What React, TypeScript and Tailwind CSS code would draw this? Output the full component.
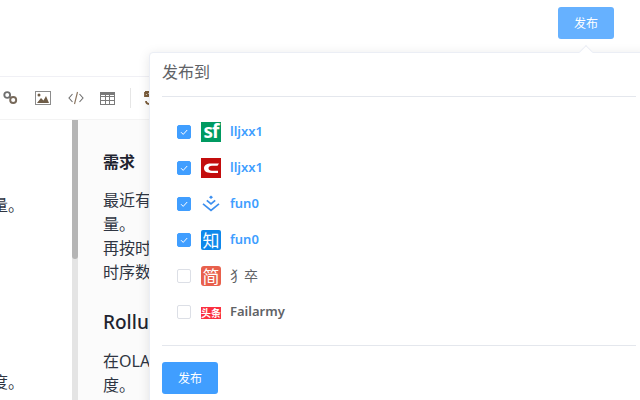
import React from 'react';

const sans = 'font-["Noto_Sans","Noto_Sans_CJK_SC",sans-serif]';

const Check = ({ on }: { on: boolean }) => (
  <span
    className={`flex h-[14px] w-[14px] items-center justify-center rounded-[2px] border ${
      on ? 'border-[#409eff] bg-[#409eff]' : 'border-[#dcdfe6] bg-white'
    }`}
  >
    {on && (
      <svg width="10" height="10" viewBox="0 0 10 10" fill="none" stroke="#fff" strokeWidth="1">
        <path d="M2 5.2 4.2 7.4 8.2 3" />
      </svg>
    )}
  </span>
);

const SfLogo = () => (
  <div className="flex h-5 w-5 items-center justify-center bg-[#009a61] pb-[2px] text-[19px] leading-none font-bold tracking-[-1px] text-white">
    sf
  </div>
);

const CsdnLogo = () => (
  <svg width="20" height="20" viewBox="0 0 20 20">
    <rect width="20" height="20" fill="#c30d0d" />
    <path d="M18 5.500H10C5.500 5.500 3 7.500 3 10.300S5.500 15 10 15h7v-2.300H11C8.800 12.700 7.500 11.700 7.500 10.200S8.800 7.800 11 7.800h5.500Z" fill="#fff" />
  </svg>
);

const JuejinLogo = () => (
  <svg width="20" height="20" viewBox="0 0 20 20" fill="none">
    <path d="M10 1.500 12 3.200 10 4.900 8 3.200Z" fill="#3c8fef" />
    <path d="M5.800 6.300 10 9.800 14.200 6.300" stroke="#3c8fef" strokeWidth="1.700" />
    <path d="M2 9.800 10 16.400 18 9.800" stroke="#3c8fef" strokeWidth="1.700" />
  </svg>
);

const ZhihuLogo = () => (
  <div className="flex h-5 w-5 items-center justify-center rounded-[2px] bg-[#0f88eb] text-[17px] leading-none text-white">
    知
  </div>
);

const JianshuLogo = () => (
  <div className="flex h-5 w-5 items-center justify-center rounded-[3px] bg-[#e8604c] text-[17px] leading-none text-white">
    简
  </div>
);

const ToutiaoLogo = () => (
  <div className="flex h-5 w-5 items-center pt-px">
    <div className="flex h-3 w-5 items-center justify-center bg-[#fb3040] text-[10px] leading-none font-bold text-white">
      头条
    </div>
  </div>
);

const accounts = [
  { on: true, logo: <SfLogo />, name: 'lljxx1' },
  { on: true, logo: <CsdnLogo />, name: 'lljxx1' },
  { on: true, logo: <JuejinLogo />, name: 'fun0' },
  { on: true, logo: <ZhihuLogo />, name: 'fun0' },
  { on: false, logo: <JianshuLogo />, name: '犭卒', light: true },
  { on: false, logo: <ToutiaoLogo />, name: 'Failarmy' },
];

const LinkIcon = () => (
  <svg width="15" height="16" viewBox="0 0 15 16" fill="none" stroke="#6f6f6f" strokeWidth="1.900">
    <circle cx="4.200" cy="5" r="2.900" />
    <circle cx="10.200" cy="10" r="3" stroke="#77695a" />
  </svg>
);

const ImageIcon = () => (
  <svg width="16" height="14" viewBox="0 0 16 14">
    <rect x="0.500" y="0.500" width="15" height="13" fill="#fff" stroke="#8c8c8c" />
    <circle cx="4" cy="4" r="1.500" fill="#6f5d48" />
    <path d="M2 12 6 7l2.500 2.500L11 5l3 7Z" fill="#6f5d48" />
  </svg>
);

const CodeIcon = () => (
  <svg width="16" height="14" viewBox="0 0 16 14" fill="none" stroke="#6f6f6f" strokeWidth="1.100">
    <path d="M4.500 3 1 7l3.500 4M11.500 3 15 7l-3.500 4" />
    <path d="M9.500 1 6.500 13" stroke="#8a7660" />
  </svg>
);

const TableIcon = () => (
  <svg width="15" height="13" viewBox="0 0 15 13" fill="none" stroke="#7a7a7a">
    <rect x="0.500" y="0.500" width="14" height="12" />
    <path d="M0 4.500h15M0 8.500h15M5.500 3v10M9.500 3v10" />
    <rect x="0" y="0" width="15" height="3" fill="#7a7a7a" stroke="none" />
  </svg>
);

const CutIcon = () => (
  <svg width="6" height="14" viewBox="0 0 6 14" fill="none" stroke="#7a5c3a" strokeWidth="1.800">
    <path d="M1 1h5M1 1v4h5M1 1l5 4" />
    <path d="M2 10c0 2 2 3 4 3" />
  </svg>
);

const App: React.FC = () => {
  return (
    <div className={`relative flex h-[400px] w-[640px] flex-col overflow-hidden bg-white ${sans}`}>
      {/* Header */}
      <div className="flex h-[77px] shrink-0 justify-end border-b border-[#f0f0f5] pt-[7px] pr-[26px]">
        <button className="h-8 w-14 rounded-[3px] bg-[#66b1ff] pt-px text-xs text-white">发布</button>
      </div>

      {/* Toolbar */}
      <div className="flex h-[43px] shrink-0 items-center border-b border-[#f3f3f3] pl-[3px]">
        <LinkIcon />
        <div className="ml-[17px]">
          <ImageIcon />
        </div>
        <div className="ml-[17px]">
          <CodeIcon />
        </div>
        <div className="ml-[16px]">
          <TableIcon />
        </div>
        <div className="ml-[15px] h-5 w-px bg-[#e6e6e6]" />
        <div className="ml-[13px]">
          <CutIcon />
        </div>
      </div>

      {/* Editor + preview */}
      <div className="flex min-h-0 flex-1 text-base text-[#2f3542]">
        <div className="w-[72px] shrink-0 overflow-hidden">
          <p className="mt-[73px] ml-[-8px] leading-6">量。</p>
          <p className="mt-[153px] ml-[-8px] leading-6">度。</p>
        </div>
        <div className="w-[6px] shrink-0 bg-[#e4e4e4]">
          <div className="h-[139px] rounded-b-[3px] bg-[#b5b5b5]" />
        </div>
        <div className="w-[72px] shrink-0 overflow-hidden bg-[#fbfbfb] pt-[32px] pl-[25px]">
          <h4 className="text-base leading-5 font-bold text-[#1f2430]">需求</h4>
          <div className="mt-4 w-[140px] leading-6">
            <p>最近有</p>
            <p>量。</p>
            <p>再按时</p>
            <p>时序数</p>
          </div>
          <h3 className="mt-6 text-[19px] leading-7 font-medium text-[#1f2430]">Rollu</h3>
          <div className="mt-[13px] w-[140px] leading-6">
            <p>在OLA</p>
            <p>度。</p>
          </div>
        </div>
      </div>

      {/* Publish popover */}
      <div className="absolute top-[52px] left-[149px] flex h-[360px] w-[500px] flex-col rounded-[4px] border border-[#ebeef5] bg-white pr-3 pl-3 shadow-[0_2px_12px_0_rgba(0,0,0,0.1)]">
        <div className="absolute top-[-6px] left-[431px] h-[10px] w-[10px] rotate-45 border-t border-l border-[#ebeef5] bg-white" />
        <div className="flex h-11 shrink-0 items-center border-b border-[#e4e7ed] pb-[5px] text-base text-[#606266]">发布到</div>
        <ul className="flex flex-col pt-[17px] pl-[15px]">
          {accounts.map((a, i) => (
            <li key={i} className="flex h-9 items-center">
              <Check on={a.on} />
              <div className="ml-[10px] w-5">{a.logo}</div>
              <span
                className={`ml-[9px] ${a.light ? 'text-sm font-normal' : 'text-[13px] font-semibold'} ${
                  a.on ? 'text-[#409eff]' : 'text-[#606266]'
                }`}
              >
                {a.name}
              </span>
            </li>
          ))}
        </ul>
        <div className="mt-[15px] border-t border-[#e4e7ed] pt-4">
          <button className="h-8 w-14 rounded-[3px] bg-[#409eff] pt-px text-xs text-white">发布</button>
        </div>
      </div>
    </div>
  );
};

export default App;
